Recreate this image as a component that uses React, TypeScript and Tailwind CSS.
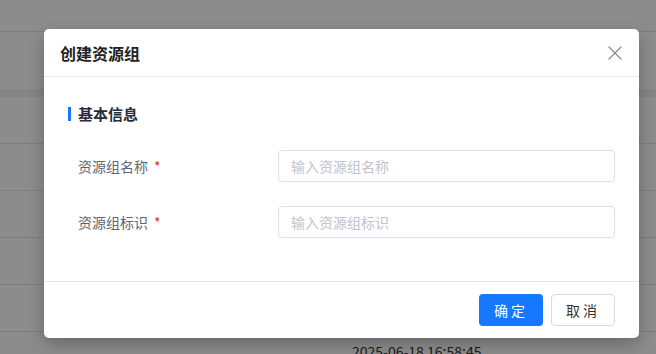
import React from "react";
import { X } from "lucide-react";

const font = { fontFamily: '"Noto Sans CJK SC", "Noto Sans", sans-serif' };

const rows = [0, 1, 2, 3, 4];

const FormRow: React.FC<{ label: string; placeholder: string }> = ({ label, placeholder }) => (
  <div className="flex items-center h-8">
    <div className="w-[210px] pl-[10px] text-[14px] text-[#5f6672] flex items-center">
      {label}
      <span className="ml-[6px] text-[#f5222d]">*</span>
    </div>
    <input
      placeholder={placeholder}
      className="flex-1 h-8 border border-[#dcdfe6] rounded-[4px] px-3 text-[14px] outline-none placeholder:text-[#c0c4cc]"
      style={font}
    />
  </div>
);

export default function App() {
  return (
    <div className="relative w-[656px] h-[354px] overflow-hidden bg-white" style={font}>
      {/* page behind */}
      <div className="flex flex-col">
        <div className="h-8 border-b border-[#e5e5e5]" />
        <div className="h-[57px]" />
        <div className="h-2 bg-[#f2f2f2]" />
        {rows.map((r) => (
          <div key={r} className="h-[47px] border-b border-[#e5e5e5]" />
        ))}
        <div className="pl-[352px] text-[14px] text-[#333] leading-none pt-[12px]">2025-06-18 16:58:45</div>
      </div>

      {/* overlay */}
      <div className="absolute inset-0 bg-black/45" />

      {/* modal */}
      <div className="absolute left-[44px] top-[29px] w-[595px] bg-white rounded-[5px] shadow-[0_6px_16px_rgba(0,0,0,0.25)]">
        <div className="h-[48px] px-4 flex items-center justify-between border-b border-[#e8e8e8]">
          <span className="text-[16px] font-bold text-[#222]">创建资源组</span>
          <X size={24} strokeWidth={1.3} className="text-[#8c8c8c] -mr-[4px]" />
        </div>

        <div className="px-6 pt-[26px] pb-[43px] border-b border-[#e8e8e8]">
          <div className="flex items-center h-[22px]">
            <span className="w-[3px] h-[14px] bg-[#1677ff]" />
            <span className="ml-[7px] text-[15px] font-bold text-[#262c3a]">基本信息</span>
          </div>
          <div className="mt-[25px] flex flex-col gap-6">
            <FormRow label="资源组名称" placeholder="输入资源组名称" />
            <FormRow label="资源组标识" placeholder="输入资源组标识" />
          </div>
        </div>

        <div className="h-[56px] px-6 flex items-center justify-end gap-2">
          <button className="w-16 h-8 rounded-[4px] bg-[#1677ff] text-white text-[14px] tracking-[3px]">确定</button>
          <button className="w-16 h-8 rounded-[4px] border border-[#d9d9d9] text-[#333] text-[14px] tracking-[3px]">取消</button>
        </div>
      </div>
    </div>
  );
}
